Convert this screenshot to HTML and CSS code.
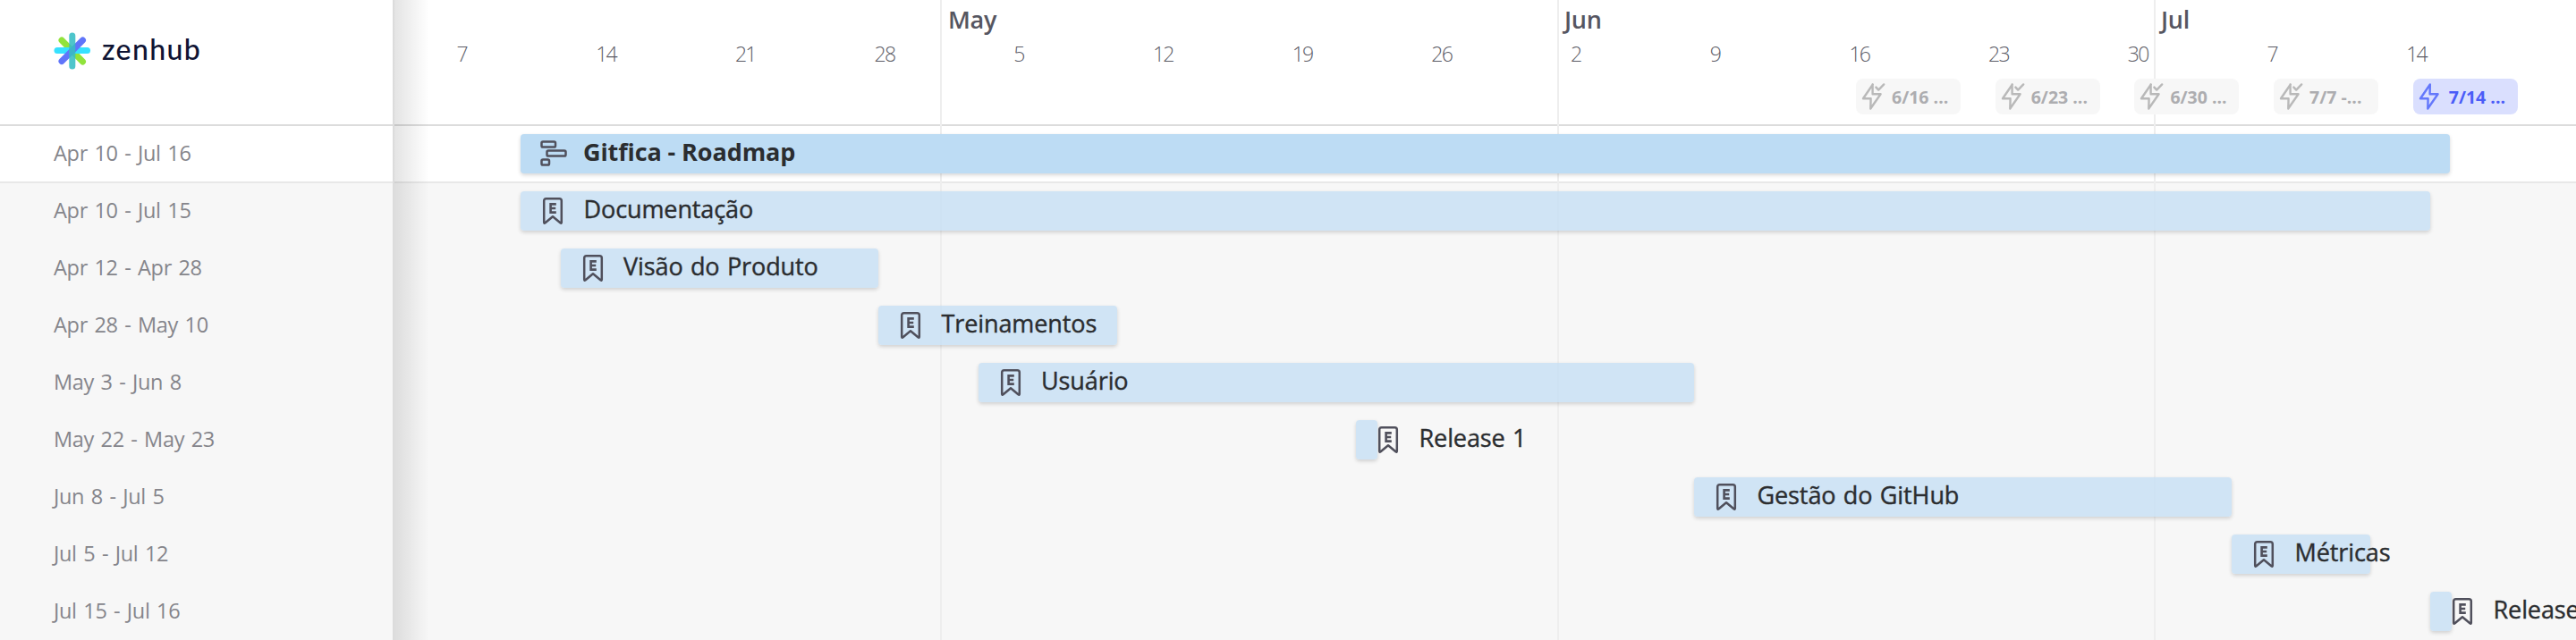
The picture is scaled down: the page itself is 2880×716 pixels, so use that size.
FILE: index.html
```html
<!DOCTYPE html>
<html lang="pt">
<head>
<meta charset="utf-8">
<title>Gitfica - Roadmap</title>
<link rel="stylesheet" href="styles.css">
</head>
<body>
<svg class="defs" aria-hidden="true">
  <symbol id="epic" viewBox="0 0 24 32">
    <path d="M2.2 28.8V4.6Q2.2 2.2 4.6 2.2H19.4Q21.8 2.2 21.8 4.6V28.8Q21.8 30.4 20.4 29.3L12 22.2L3.6 29.3Q2.2 30.4 2.2 28.8Z" fill="none" stroke="currentColor" stroke-width="2.5" stroke-linejoin="round"/>
    <path d="M15.8 8.4H9.6V17.6H15.8M9.6 13H15.2" fill="none" stroke="currentColor" stroke-width="2.6"/>
  </symbol>
  <symbol id="gantt" viewBox="0 0 30 30">
    <g fill="none" stroke="currentColor" stroke-width="2.5">
      <rect x="1.5" y="1.5" width="15.500" height="6" rx="1.6"/>
      <rect x="7.5" y="11.5" width="21" height="6" rx="1.6"/>
      <rect x="1.5" y="21.5" width="8.500" height="6" rx="1.6"/>
    </g>
  </symbol>
  <symbol id="bolt" viewBox="0 0 28 32">
    <path d="M12.8 2.5L2 18.2H10.6L10.3 29.5L21.6 13.2H12.6Z" fill="none" stroke="currentColor" stroke-width="2.4" stroke-linejoin="round"/>
  </symbol>
  <symbol id="bolt-done" viewBox="0 0 28 32">
    <path d="M12.8 2.5L2 18.2H10.6L10.3 29.5L21.6 13.2H12.6V2.5" fill="none" stroke="currentColor" stroke-width="2.4" stroke-linejoin="round" stroke-linecap="round"/>
    <path d="M16.4 5.6L19.2 8.6L25.2 2.4" fill="none" stroke="currentColor" stroke-width="2.4" stroke-linejoin="round" stroke-linecap="round"/>
  </symbol>
</svg>
<div class="roadmap">
  <aside class="sidebar">
    <div class="brand">
      <svg class="brand-mark" viewBox="0 0 42 42">
        <g fill="none" stroke-width="7" stroke-linecap="round">
          <path d="M9 9L32.500 33" stroke="#91e33b"/>
          <path d="M4 20.500H37.500" stroke="#36e1ff"/>
          <path d="M32.500 9L9 32.500" stroke="#6075fa"/>
          <path d="M20.800 4V38" stroke="#35bdc4" stroke-opacity=".88"/>
        </g>
      </svg>
      <span class="brand-name">zenhub</span>
    </div>
    <ul class="dates">
      <li class="date date-top">Apr 10 - Jul 16</li>
      <li class="date">Apr 10 - Jul 15</li>
      <li class="date">Apr 12 - Apr 28</li>
      <li class="date">Apr 28 - May 10</li>
      <li class="date">May 3 - Jun 8</li>
      <li class="date">May 22 - May 23</li>
      <li class="date">Jun 8 - Jul 5</li>
      <li class="date">Jul 5 - Jul 12</li>
      <li class="date">Jul 15 - Jul 16</li>
    </ul>
  </aside>
  <main class="timeline">
    <div class="month-lines"><i style="width:610px"></i><i style="width:689.500px"></i><i style="width:667.500px"></i><i></i></div>
    <header class="scale">
      <div class="months"><span style="width:610px"></span><span style="width:689px">May</span><span style="width:667px">Jun</span><span>Jul</span></div>
      <div class="days"><span>7</span><span>14</span><span>21</span><span>28</span><span>5</span><span>12</span><span>19</span><span>26</span><span>2</span><span>9</span><span>16</span><span>23</span><span>30</span><span>7</span><span>14</span></div>
      <div class="sprints">
        <span class="sprint"><svg><use href="#bolt-done"/></svg>6/16 ...</span>
        <span class="sprint"><svg><use href="#bolt-done"/></svg>6/23 ...</span>
        <span class="sprint"><svg><use href="#bolt-done"/></svg>6/30 ...</span>
        <span class="sprint"><svg><use href="#bolt-done"/></svg>7/7 -...</span>
        <span class="sprint sprint-current"><svg><use href="#bolt"/></svg>7/14 ...</span>
      </div>
    </header>
    <div class="row row-top"><div class="bar bar-top" style="margin-left:141px;width:2157px"><svg class="gantt"><use href="#gantt"/></svg><span>Gitfica - Roadmap</span></div></div>
    <div class="row"><div class="bar" style="margin-left:141px;width:2135px"><svg><use href="#epic"/></svg><span>Documentação</span></div></div>
    <div class="row"><div class="bar" style="margin-left:185.500px;width:355.500px"><svg><use href="#epic"/></svg><span>Visão do Produto</span></div></div>
    <div class="row"><div class="bar" style="margin-left:541px;width:267px"><svg><use href="#epic"/></svg><span>Treinamentos</span></div></div>
    <div class="row"><div class="bar" style="margin-left:652.500px;width:800.500px"><svg><use href="#epic"/></svg><span>Usuário</span></div></div>
    <div class="row"><div class="bar" style="margin-left:1075px;width:22px"><svg><use href="#epic"/></svg><span>Release 1</span></div></div>
    <div class="row"><div class="bar" style="margin-left:1453px;width:601px"><svg><use href="#epic"/></svg><span>Gestão do GitHub</span></div></div>
    <div class="row"><div class="bar" style="margin-left:2054px;width:155px"><svg><use href="#epic"/></svg><span>Métricas</span></div></div>
    <div class="row"><div class="bar" style="margin-left:2276px;width:22px"><svg><use href="#epic"/></svg><span>Release</span></div></div>
  </main>
</div>
</body>
</html>
```
FILE: styles.css
```css
* { box-sizing: border-box; }
body { margin: 0; background: #f7f7f7; font-family: "Open Sans", "Noto Sans", sans-serif; overflow: hidden; }
.defs { position: absolute; width: 0; height: 0; }
.roadmap { display: flex; width: 2880px; height: 716px; overflow: hidden; }

.sidebar { flex: 0 0 441px; border-right: 2px solid #dcdcdc; background: #f7f7f7; }
.brand { display: flex; align-items: flex-start; height: 141px; padding: 36px 0 0 60px; gap: 12px; background: #fff; border-bottom: 2px solid #dcdcdc; }
.brand-mark { width: 42px; height: 42px; }
.brand-name { font-family: Lato, sans-serif; font-weight: 500; font-size: 32px; line-height: 37px; letter-spacing: 1.4px; color: #0f1433; }
.dates { margin: 0; padding: 0; list-style: none; }
.date { height: 64px; padding-left: 60px; font-size: 23.500px; line-height: 61px; letter-spacing: -.3px; word-spacing: 1.700px; color: #85858b; white-space: nowrap; }
.date-top { background: #fff; border-bottom: 2px solid #e8e8e8; }

.timeline { position: relative; flex: 0 0 2439px; overflow: hidden; }
.timeline::after { content: ""; position: absolute; inset: 0 auto 0 0; width: 39px; background: linear-gradient(90deg, rgba(0,0,0,.105), rgba(0,0,0,.06) 45%, rgba(0,0,0,0)); }
.month-lines { position: absolute; inset: 0; display: flex; }
.month-lines i { flex: none; height: 100%; }
.month-lines i + i { border-left: 2px solid #eeeeee; }
.scale { height: 141px; background: #fff; border-bottom: 2px solid #dcdcdc; }
.months { display: flex; height: 44px; font-size: 27px; font-weight: 600; line-height: 44px; letter-spacing: -.3px; color: #565661; }
.months span { flex: none; padding-left: 9px; }
.days { display: grid; grid-template-columns: repeat(15, 155.700px); height: 44px; padding-left: 69.500px; font-size: 23px; font-weight: 300; line-height: 32px; letter-spacing: -1.700px; color: #5c5c66; }
.sprints { position: relative; display: flex; gap: 38.700px; padding-left: 1634px; }
.sprint { display: flex; align-items: center; flex: none; width: 117px; height: 40px; padding-left: 6px; gap: 6px; border-radius: 8px; background: #f7f7f7; color: #adadb0; font-size: 19.500px; font-weight: 700; white-space: nowrap; }
.sprint svg { flex: none; width: 28px; height: 32px; color: #b9b9b9; }
.sprint-current { background: #dadffe; color: #4a5cf8; }
.sprint-current svg { color: #6478fb; }

.row { height: 64px; padding-top: 9px; }
.row-top { background: #fff; border-bottom: 2px solid #e8e8e8; }
.bar { position: relative; display: flex; align-items: center; height: 44px; padding-left: 24px; border-radius: 4px; background: rgba(198,223,244,.8); box-shadow: 0 2px 4px rgba(0,0,0,.16); color: #2b2d30; font-size: 27px; font-weight: 500; word-spacing: 1.500px; letter-spacing: -.1px; white-space: nowrap; -webkit-text-stroke: .4px currentColor; }
.bar svg { flex: none; width: 24px; height: 32px; margin-right: 22.500px; color: #50505c; }
.bar span { line-height: 40px; padding-bottom: 4px; }
.bar-top { background: #bddcf4; font-weight: 700; padding-left: 22px; word-spacing: 0; -webkit-text-stroke: 0; }
.bar .gantt { width: 30px; height: 30px; margin-right: 18px; }
```
